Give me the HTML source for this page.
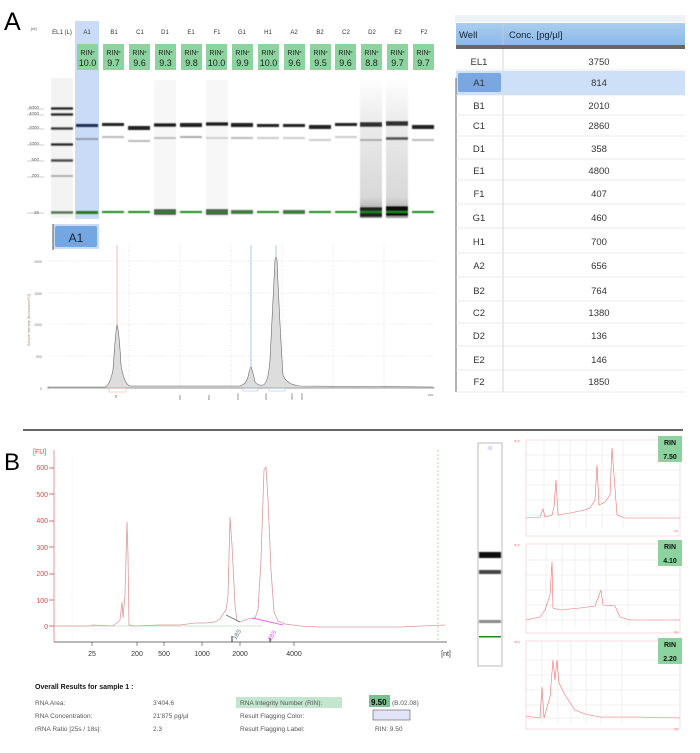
<!DOCTYPE html>
<html><head><meta charset="utf-8"><style>
html,body{margin:0;padding:0;background:#fff;width:700px;height:753px;overflow:hidden}
svg{display:block;font-family:"Liberation Sans",sans-serif}
</style></head><body>
<svg width="700" height="753" viewBox="0 0 700 753" xmlns="http://www.w3.org/2000/svg">
<defs>
<linearGradient id="hdr" x1="0" y1="0" x2="0" y2="1"><stop offset="0" stop-color="#a9cdf0"/><stop offset="1" stop-color="#8cb9e6"/></linearGradient>
<linearGradient id="smear" x1="0" y1="0" x2="0" y2="1"><stop offset="0" stop-color="#fff"/><stop offset="0.3" stop-color="#ececec"/><stop offset="0.85" stop-color="#d8d8d8"/><stop offset="1" stop-color="#999"/></linearGradient>
<filter id="bl" x="-5%" y="-5%" width="110%" height="110%"><feGaussianBlur stdDeviation="0.5"/></filter>
</defs>
<text x="4" y="30" font-size="25" fill="#000">A</text>
<text x="31" y="30" font-size="4" fill="#555">[nt]</text>

<rect x="75" y="21" width="24" height="198" fill="#c9dbf7"/>

<g font-size="6" fill="#333" text-anchor="middle">
<text x="62" y="34">EL1 (L)</text><text x="87" y="34">A1</text><text x="114" y="34">B1</text><text x="140" y="34">C1</text><text x="165" y="34">D1</text><text x="191" y="34">E1</text><text x="217" y="34">F1</text><text x="242" y="34">G1</text><text x="268" y="34">H1</text><text x="294" y="34">A2</text><text x="320" y="34">B2</text><text x="346" y="34">C2</text><text x="372" y="34">D2</text><text x="398" y="34">E2</text><text x="424" y="34">F2</text>
</g>
<g font-size="7" text-anchor="middle" fill="#222">
<rect x="77" y="44" width="21" height="26" fill="#8dd3a0"/><text x="87.5" y="55">RIN<tspan font-size="4" dy="-2">e</tspan></text><text x="87.5" y="66" font-size="9">10.0</text>
<rect x="103" y="44" width="21" height="26" fill="#8dd3a0"/><text x="113.5" y="55">RIN<tspan font-size="4" dy="-2">e</tspan></text><text x="113.5" y="66" font-size="9">9.7</text>
<rect x="129" y="44" width="21" height="26" fill="#8dd3a0"/><text x="139.5" y="55">RIN<tspan font-size="4" dy="-2">e</tspan></text><text x="139.5" y="66" font-size="9">9.6</text>
<rect x="155" y="44" width="21" height="26" fill="#8dd3a0"/><text x="165.5" y="55">RIN<tspan font-size="4" dy="-2">e</tspan></text><text x="165.5" y="66" font-size="9">9.3</text>
<rect x="181" y="44" width="21" height="26" fill="#8dd3a0"/><text x="191.5" y="55">RIN<tspan font-size="4" dy="-2">e</tspan></text><text x="191.5" y="66" font-size="9">9.8</text>
<rect x="206" y="44" width="21" height="26" fill="#8dd3a0"/><text x="216.5" y="55">RIN<tspan font-size="4" dy="-2">e</tspan></text><text x="216.5" y="66" font-size="9">10.0</text>
<rect x="232" y="44" width="21" height="26" fill="#8dd3a0"/><text x="242.5" y="55">RIN<tspan font-size="4" dy="-2">e</tspan></text><text x="242.5" y="66" font-size="9">9.9</text>
<rect x="258" y="44" width="21" height="26" fill="#8dd3a0"/><text x="268.5" y="55">RIN<tspan font-size="4" dy="-2">e</tspan></text><text x="268.5" y="66" font-size="9">10.0</text>
<rect x="284" y="44" width="21" height="26" fill="#8dd3a0"/><text x="294.5" y="55">RIN<tspan font-size="4" dy="-2">e</tspan></text><text x="294.5" y="66" font-size="9">9.6</text>
<rect x="310" y="44" width="21" height="26" fill="#8dd3a0"/><text x="320.5" y="55">RIN<tspan font-size="4" dy="-2">e</tspan></text><text x="320.5" y="66" font-size="9">9.5</text>
<rect x="335" y="44" width="21" height="26" fill="#8dd3a0"/><text x="345.5" y="55">RIN<tspan font-size="4" dy="-2">e</tspan></text><text x="345.5" y="66" font-size="9">9.6</text>
<rect x="361" y="44" width="21" height="26" fill="#8dd3a0"/><text x="371.5" y="55">RIN<tspan font-size="4" dy="-2">e</tspan></text><text x="371.5" y="66" font-size="9">8.8</text>
<rect x="387" y="44" width="21" height="26" fill="#8dd3a0"/><text x="397.5" y="55">RIN<tspan font-size="4" dy="-2">e</tspan></text><text x="397.5" y="66" font-size="9">9.7</text>
<rect x="413" y="44" width="21" height="26" fill="#8dd3a0"/><text x="423.5" y="55">RIN<tspan font-size="4" dy="-2">e</tspan></text><text x="423.5" y="66" font-size="9">9.7</text>
</g>

<g font-size="4.5" fill="#666" text-anchor="end">
<text x="39" y="109">6000</text><text x="39" y="115">4000</text><text x="39" y="129">2000</text><text x="39" y="145">1000</text><text x="39" y="161">500</text><text x="39" y="177">200</text><text x="39" y="214">25</text>
</g>
<g stroke="#999" stroke-width="0.5"><line x1="27" y1="109" x2="44" y2="109"/><line x1="27" y1="115" x2="44" y2="115"/><line x1="27" y1="129" x2="44" y2="129"/><line x1="27" y1="145" x2="44" y2="145"/><line x1="27" y1="161" x2="44" y2="161"/><line x1="27" y1="177" x2="44" y2="177"/><line x1="27" y1="213" x2="44" y2="213"/></g>

<g filter="url(#bl)">
<rect x="51" y="78" width="22" height="140" fill="#f3f3f3"/>
<rect x="51" y="107" width="22" height="3" fill="#333"/><rect x="51" y="113" width="22" height="3" fill="#333"/><rect x="51" y="127" width="22" height="3" fill="#444"/><rect x="51" y="143" width="22" height="3" fill="#333"/><rect x="51" y="159" width="22" height="3" fill="#555"/><rect x="51" y="175" width="22" height="2" fill="#aaa"/><rect x="51" y="211" width="22" height="3" fill="#777"/><rect x="51" y="212" width="22" height="1" fill="#1a8a1a"/>
<rect x="76" y="124" width="22" height="3" fill="#1f2f55"/><rect x="76" y="138" width="22" height="2" fill="#99a"/><rect x="76" y="211" width="22" height="3" fill="#2a7a2a"/>
<rect x="102" y="123" width="22" height="3" fill="#222"/><rect x="102" y="136" width="22" height="2" fill="#bbb"/><rect x="102" y="211" width="22" height="2" fill="#1a8a1a"/>
<rect x="128" y="126" width="22" height="4" fill="#222"/><rect x="128" y="140" width="22" height="2" fill="#bbb"/><rect x="128" y="211" width="22" height="2" fill="#1a8a1a"/>
<rect x="154" y="80" width="22" height="137" fill="#f7f7f7"/><rect x="154" y="123" width="22" height="4" fill="#222"/><rect x="154" y="137" width="22" height="2" fill="#bbb"/><rect x="154" y="209" width="22" height="6" fill="#555"/><rect x="154" y="211" width="22" height="2" fill="#1a8a1a"/>
<rect x="180" y="123" width="22" height="4" fill="#222"/><rect x="180" y="136" width="22" height="2" fill="#aaa"/><rect x="180" y="211" width="22" height="2" fill="#1a8a1a"/>
<rect x="206" y="80" width="22" height="137" fill="#f7f7f7"/><rect x="206" y="122" width="22" height="4" fill="#222"/><rect x="206" y="137" width="22" height="2" fill="#ccc"/><rect x="206" y="209" width="22" height="6" fill="#555"/><rect x="206" y="211" width="22" height="2" fill="#1a8a1a"/>
<rect x="231" y="123" width="22" height="4" fill="#222"/><rect x="231" y="137" width="22" height="2" fill="#bbb"/><rect x="231" y="210" width="22" height="4" fill="#666"/><rect x="231" y="211" width="22" height="2" fill="#1a8a1a"/>
<rect x="257" y="124" width="22" height="3" fill="#222"/><rect x="257" y="137" width="22" height="2" fill="#ccc"/><rect x="257" y="211" width="22" height="2" fill="#1a8a1a"/>
<rect x="283" y="124" width="22" height="3" fill="#222"/><rect x="283" y="137" width="22" height="2" fill="#ccc"/><rect x="283" y="210" width="22" height="4" fill="#666"/><rect x="283" y="211" width="22" height="2" fill="#1a8a1a"/>
<rect x="309" y="125" width="22" height="4" fill="#222"/><rect x="309" y="139" width="22" height="2" fill="#ccc"/><rect x="309" y="211" width="22" height="2" fill="#1a8a1a"/>
<rect x="335" y="123" width="22" height="3" fill="#222"/><rect x="335" y="136" width="22" height="2" fill="#ccc"/><rect x="335" y="211" width="22" height="2" fill="#1a8a1a"/>
<rect x="360" y="78" width="22" height="140" fill="url(#smear)"/><rect x="360" y="122" width="22" height="5" fill="#333"/><rect x="360" y="139" width="22" height="2" fill="#aaa"/><rect x="360" y="207" width="22" height="10" fill="#222"/><rect x="360" y="211" width="22" height="2" fill="#1a8a1a"/>
<rect x="386" y="78" width="22" height="140" fill="url(#smear)"/><rect x="386" y="121" width="22" height="5" fill="#333"/><rect x="386" y="137" width="22" height="3" fill="#555"/><rect x="386" y="206" width="22" height="10" fill="#111"/><rect x="386" y="211" width="22" height="2" fill="#1a8a1a"/>
<rect x="412" y="125" width="22" height="4" fill="#222"/><rect x="412" y="139" width="22" height="2" fill="#bbb"/><rect x="412" y="211" width="22" height="2" fill="#1a8a1a"/>
</g>

<rect x="53" y="224" width="46" height="25" fill="#c9dbf7"/>
<rect x="55" y="226" width="42" height="21" rx="2" fill="#74a6e2"/>
<line x1="53" y1="224" x2="53" y2="250" stroke="#555" stroke-width="1"/>
<text x="76" y="242" font-size="12" fill="#223" text-anchor="middle">A1</text>

<g stroke="#ccc" stroke-width="0.5" stroke-dasharray="1,1.5">
<line x1="48" y1="261" x2="435" y2="261"/><line x1="48" y1="293" x2="435" y2="293"/><line x1="48" y1="324" x2="435" y2="324"/><line x1="48" y1="356" x2="435" y2="356"/>
<line x1="129" y1="245" x2="129" y2="388"/><line x1="180" y1="245" x2="180" y2="388"/><line x1="231" y1="245" x2="231" y2="388"/><line x1="282" y1="245" x2="282" y2="388"/><line x1="333" y1="245" x2="333" y2="388"/><line x1="384" y1="245" x2="384" y2="388"/>
</g>
<line x1="47" y1="388" x2="435" y2="388" stroke="#999" stroke-width="0.6"/>
<g font-size="3.5" fill="#777" text-anchor="end"><text x="42" y="263">2000</text><text x="42" y="295">1500</text><text x="42" y="326">1000</text><text x="42" y="358">500</text><text x="42" y="390">0</text></g>
<text x="30" y="320" font-size="3.5" fill="#a87" transform="rotate(-90 30 320)" text-anchor="middle">Sample Intensity [Normalized FU]</text>
<line x1="117" y1="245" x2="117" y2="388" stroke="#f4a8a0" stroke-width="0.8"/>
<line x1="251" y1="245" x2="251" y2="388" stroke="#9bbbe8" stroke-width="0.8"/>
<line x1="276" y1="245" x2="276" y2="388" stroke="#9bbbe8" stroke-width="0.8"/>
<path d="M48 387 L105 387 Q110 385 113 370 Q116 326 117 325 Q119 330 121 365 Q124 384 130 386 L240 386 Q246 384 248 377 Q250 367 251 367 Q253 372 255 382 Q258 386 263 385 Q268 384 270 360 Q273 300 275 260 Q276 254 277 260 Q280 330 283 375 Q287 385 300 386 L433 387 L433 388 L48 388 Z" fill="#ddd" stroke="#666" stroke-width="0.6"/>
<rect x="109" y="388" width="17" height="4" fill="none" stroke="#f4a8a0" stroke-width="0.5"/>
<rect x="243" y="388" width="15" height="3" fill="none" stroke="#9bbbe8" stroke-width="0.5"/>
<rect x="269" y="388" width="16" height="3" fill="none" stroke="#9bbbe8" stroke-width="0.5"/>
<g font-size="3" fill="#666"><text x="117" y="398" transform="rotate(-90 117 398)">25</text><text x="181" y="400" transform="rotate(-90 181 400)">200</text><text x="210" y="400" transform="rotate(-90 210 400)">500</text><text x="239" y="400" transform="rotate(-90 239 400)">1000</text><text x="267" y="400" transform="rotate(-90 267 400)">2000</text><text x="293" y="400" transform="rotate(-90 293 400)">4000</text><text x="303" y="400" transform="rotate(-90 303 400)">6000</text><text x="428" y="396">100</text></g>

<rect x="455" y="15" width="230" height="7" fill="#eef2f6"/>
<rect x="456" y="23" width="229" height="22" fill="url(#hdr)"/>
<line x1="503" y1="23" x2="503" y2="392" stroke="#ccc" stroke-width="0.8"/>
<text x="459" y="38" font-size="9.5" fill="#123">Well</text>
<text x="509" y="38" font-size="9.5" fill="#123">Conc. [pg/µl]</text>
<rect x="456" y="45" width="229" height="4" fill="#666"/>
<rect x="456" y="71" width="229" height="24" fill="#cde0f7"/>
<rect x="458" y="73" width="43" height="19" rx="2" fill="#7aa7e0"/>
<line x1="456" y1="78" x2="456" y2="392" stroke="#666" stroke-width="1"/>
<g stroke="#e2e2e2" stroke-width="0.8">
<line x1="456" y1="70" x2="685" y2="70"/><line x1="456" y1="95" x2="685" y2="95"/><line x1="456" y1="115" x2="685" y2="115"/><line x1="456" y1="136" x2="685" y2="136"/><line x1="456" y1="159" x2="685" y2="159"/><line x1="456" y1="180" x2="685" y2="180"/><line x1="456" y1="204" x2="685" y2="204"/><line x1="456" y1="228" x2="685" y2="228"/><line x1="456" y1="253" x2="685" y2="253"/><line x1="456" y1="277" x2="685" y2="277"/><line x1="456" y1="301" x2="685" y2="301"/><line x1="456" y1="323" x2="685" y2="323"/><line x1="456" y1="346" x2="685" y2="346"/><line x1="456" y1="370" x2="685" y2="370"/><line x1="456" y1="392" x2="685" y2="392"/>
</g>
<g font-size="9.5" fill="#333" text-anchor="middle">
<text x="479" y="65">EL1</text><text x="599" y="65">3750</text>
<text x="479" y="86">A1</text><text x="599" y="86">814</text>
<text x="479" y="109">B1</text><text x="599" y="109">2010</text>
<text x="479" y="129">C1</text><text x="599" y="129">2860</text>
<text x="479" y="152">D1</text><text x="599" y="152">358</text>
<text x="479" y="174">E1</text><text x="599" y="174">4800</text>
<text x="479" y="197">F1</text><text x="599" y="197">407</text>
<text x="479" y="221">G1</text><text x="599" y="221">460</text>
<text x="479" y="245">H1</text><text x="599" y="245">700</text>
<text x="479" y="269">A2</text><text x="599" y="269">656</text>
<text x="479" y="294">B2</text><text x="599" y="294">764</text>
<text x="479" y="316">C2</text><text x="599" y="316">1380</text>
<text x="479" y="339">D2</text><text x="599" y="339">136</text>
<text x="479" y="363">E2</text><text x="599" y="363">146</text>
<text x="479" y="385">F2</text><text x="599" y="385">1850</text>
</g>

<line x1="23" y1="430" x2="683" y2="430" stroke="#333" stroke-width="1.5"/>

<text x="4" y="470" font-size="24" fill="#000">B</text>
<text x="33" y="454" font-size="7" fill="#e44">[FU]</text>
<line x1="54" y1="450" x2="54" y2="642" stroke="#f2b8b8" stroke-width="1.5"/>
<line x1="54" y1="642" x2="447" y2="642" stroke="#444" stroke-width="0.8"/>
<line x1="72" y1="452" x2="72" y2="642" stroke="#eee" stroke-width="0.5" stroke-dasharray="1,1"/>
<line x1="438" y1="450" x2="438" y2="642" stroke="#6c6" stroke-width="0.6" stroke-dasharray="2,2"/>
<g font-size="7" fill="#e44" text-anchor="end">
<text x="48" y="470">600</text><text x="48" y="497">500</text><text x="48" y="523">400</text><text x="48" y="550">300</text><text x="48" y="576">200</text><text x="48" y="603">100</text><text x="48" y="629">0</text>
</g>
<g stroke="#e44" stroke-width="0.8"><line x1="49" y1="468" x2="54" y2="468"/><line x1="49" y1="494" x2="54" y2="494"/><line x1="49" y1="521" x2="54" y2="521"/><line x1="49" y1="547" x2="54" y2="547"/><line x1="49" y1="574" x2="54" y2="574"/><line x1="49" y1="600" x2="54" y2="600"/><line x1="49" y1="626" x2="54" y2="626"/></g>
<line x1="54" y1="626" x2="262" y2="626" stroke="#9c9" stroke-width="0.6"/>
<path d="M54 626 L90 626 L93 625 L113 626 Q118 622 120 620 L122 602 L123 618 L125 595 L127 522 L128 555 L129 625 L135 626 L160 625 L180 625 L195 623 L205 623 L215 622 L220 619 L223 614 L226 610 L228 596 L230 517 L232 545 L235 605 L237 621 L240 622 L248 619 L255 618 L258 610 L261 560 L264 470 L266 467 L268 500 L271 570 L274 612 L278 621 L285 624 L300 626 L320 627 L400 627 L445 625" fill="none" stroke="#d99" stroke-width="0.8"/>
<line x1="226" y1="615" x2="240" y2="622" stroke="#577" stroke-width="0.8"/>
<line x1="252" y1="618" x2="283" y2="625" stroke="#e4e" stroke-width="0.8"/>
<text x="236" y="640" font-size="6" fill="#577" transform="rotate(-60 236 640)">18S</text>
<text x="271" y="641" font-size="6" fill="#e4e" transform="rotate(-60 271 641)">28S</text>
<line x1="232" y1="636" x2="232" y2="642" stroke="#333"/><line x1="270" y1="638" x2="270" y2="642" stroke="#333"/>
<g stroke="#444" stroke-width="0.6"><line x1="92" y1="642" x2="92" y2="646"/><line x1="137" y1="642" x2="137" y2="646"/><line x1="164" y1="642" x2="164" y2="646"/><line x1="202" y1="642" x2="202" y2="646"/><line x1="240" y1="642" x2="240" y2="646"/><line x1="294" y1="642" x2="294" y2="646"/></g>
<g font-size="7" fill="#333" text-anchor="middle"><text x="92" y="656">25</text><text x="137" y="656">200</text><text x="164" y="656">500</text><text x="202" y="656">1000</text><text x="240" y="656">2000</text><text x="294" y="656">4000</text><text x="446" y="656">[nt]</text></g>

<text x="35" y="689" font-size="7" font-weight="bold" fill="#111">Overall Results for sample 1  :</text>
<g font-size="6.5" fill="#555">
<text x="35" y="705">RNA Area:</text><text x="153" y="705">3'404.6</text>
<text x="35" y="718">RNA Concentration:</text><text x="153" y="718">21'875 pg/µl</text>
<text x="35" y="731">rRNA Ratio [25s / 18s]:</text><text x="153" y="731">2.3</text>
<rect x="236" y="697" width="106" height="11" fill="#c3e6cf"/>
<text x="240" y="705">RNA Integrity Number (RIN):</text>
<text x="240" y="718">Result Flagging Color:</text>
<text x="240" y="731">Result Flagging Label:</text>
<text x="392" y="705">(B.02.08)</text>
<text x="375" y="731">RIN: 9.50</text>
</g>
<rect x="369" y="695" width="21" height="12" fill="#77c28e"/>
<text x="371" y="705" font-size="8" font-weight="bold" fill="#000">9.50</text>
<rect x="373" y="710" width="37" height="10" fill="#e3e3f7" stroke="#555" stroke-width="0.6"/>

<rect x="478" y="443" width="24" height="223" fill="#fff" stroke="#bbb" stroke-width="1"/>
<circle cx="490" cy="448" r="2.5" fill="#dde0f5"/>
<g filter="url(#bl)">
<rect x="479" y="552" width="22" height="6" fill="#111"/>
<rect x="479" y="570" width="22" height="4" fill="#444"/>
<rect x="479" y="620" width="22" height="3" fill="#888"/>
</g>
<rect x="479" y="636" width="22" height="1.5" fill="#1a8a1a"/>

<g stroke="#ddd" stroke-width="0.4">
<rect x="526" y="440" width="154" height="96" fill="none" stroke="#eaa"/>
<line x1="544" y1="440" x2="544" y2="528"/><line x1="559" y1="440" x2="559" y2="528"/><line x1="570" y1="440" x2="570" y2="528"/><line x1="586" y1="440" x2="586" y2="528"/><line x1="602" y1="440" x2="602" y2="528"/><line x1="623" y1="440" x2="623" y2="528"/>
<line x1="526" y1="455" x2="680" y2="455"/><line x1="526" y1="470" x2="680" y2="470"/><line x1="526" y1="485" x2="680" y2="485"/><line x1="526" y1="500" x2="680" y2="500"/><line x1="526" y1="515" x2="680" y2="515"/>
<rect x="526" y="544" width="154" height="89" fill="none" stroke="#eaa"/>
<line x1="546" y1="544" x2="546" y2="627"/><line x1="562" y1="544" x2="562" y2="627"/><line x1="575" y1="544" x2="575" y2="627"/><line x1="590" y1="544" x2="590" y2="627"/><line x1="606" y1="544" x2="606" y2="627"/><line x1="628" y1="544" x2="628" y2="627"/>
<line x1="526" y1="560" x2="680" y2="560"/><line x1="526" y1="575" x2="680" y2="575"/><line x1="526" y1="590" x2="680" y2="590"/><line x1="526" y1="605" x2="680" y2="605"/><line x1="526" y1="620" x2="680" y2="620"/>
<rect x="526" y="641" width="154" height="88" fill="none" stroke="#eaa"/>
<line x1="542" y1="641" x2="542" y2="724"/><line x1="558" y1="641" x2="558" y2="724"/><line x1="571" y1="641" x2="571" y2="724"/><line x1="586" y1="641" x2="586" y2="724"/><line x1="601" y1="641" x2="601" y2="724"/><line x1="622" y1="641" x2="622" y2="724"/>
<line x1="526" y1="660" x2="680" y2="660"/><line x1="526" y1="675" x2="680" y2="675"/><line x1="526" y1="690" x2="680" y2="690"/><line x1="526" y1="705" x2="680" y2="705"/><line x1="526" y1="718" x2="680" y2="718"/>
</g>
<g fill="none" stroke="#f07070" stroke-width="0.6">
<path d="M526 518 L540 517 L543 509 L545 517 L552 515 L554 507 L556 480 L558 515 L570 513 L585 510 L590 508 L595 500 L597 465 L599 505 L605 502 L610 495 L612 448 L614 475 L617 515 L625 518 L680 518"/>
<path d="M526 620 L540 617 L545 610 L550 595 L552 562 L553 608 L560 610 L580 608 L595 606 L601 590 L603 605 L615 606 L620 617 L630 620 L680 620"/>
<path d="M526 716 L540 718 L542 687 L544 718 L550 697 L553 660 L555 680 L557 660 L559 683 L565 695 L575 710 L585 714 L600 717 L640 717 L680 718"/>
</g>
<g font-size="3" fill="#e66"><text x="514" y="442">[FU]</text><text x="514" y="546">[FU]</text><text x="514" y="643">[FU]</text><text x="674" y="532">[nt]</text><text x="674" y="633">[nt]</text><text x="674" y="730">[nt]</text></g>
<g font-size="7" font-weight="bold" fill="#111" text-anchor="middle">
<rect x="658" y="436" width="24" height="26" fill="#8dd3a0"/><text x="670" y="445">RIN</text><text x="670" y="459">7.50</text>
<rect x="658" y="540" width="24" height="26" fill="#8dd3a0"/><text x="670" y="549">RIN</text><text x="670" y="563">4.10</text>
<rect x="658" y="638" width="24" height="26" fill="#8dd3a0"/><text x="670" y="647">RIN</text><text x="670" y="661">2.20</text>
</g>
</svg>
</body></html>
